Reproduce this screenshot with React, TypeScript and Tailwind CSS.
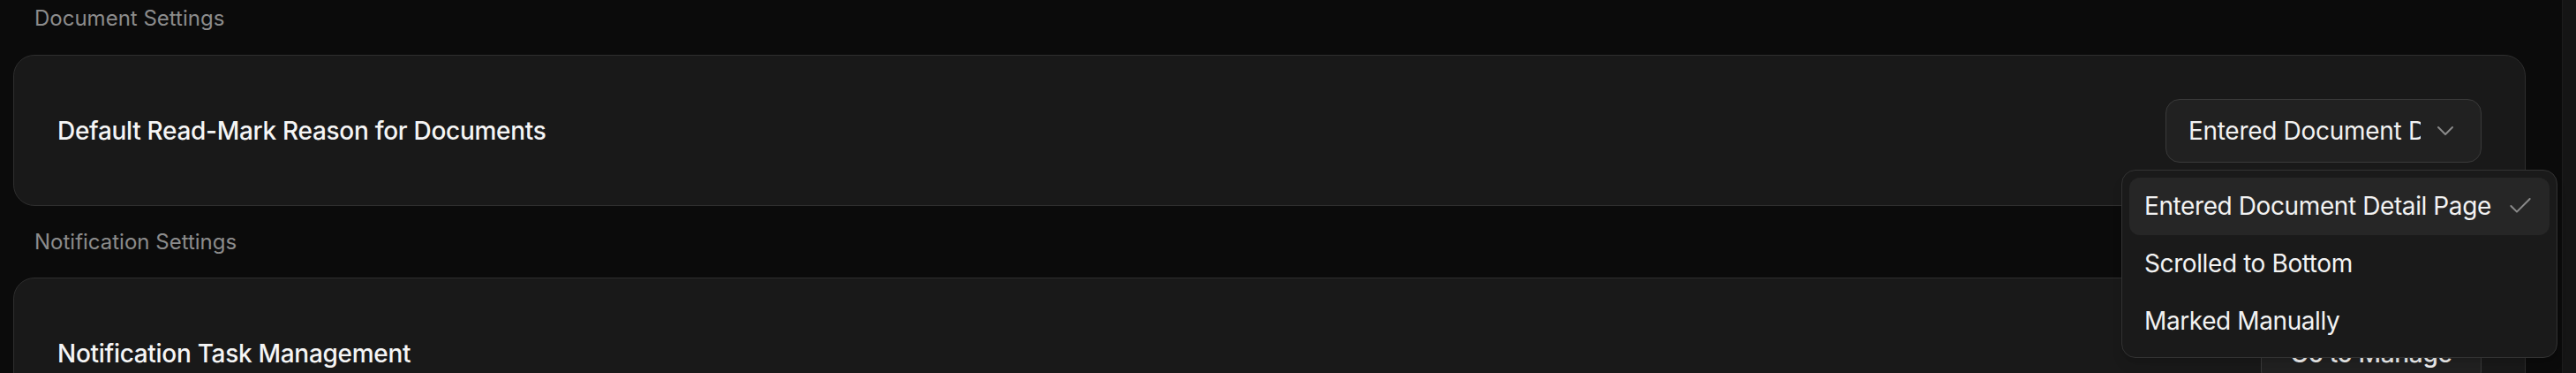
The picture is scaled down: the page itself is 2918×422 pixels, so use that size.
import { Check, ChevronDown } from "lucide-react";

const reasons = [
  "Entered Document Detail Page",
  "Scrolled to Bottom",
  "Marked Manually",
];

function SectionLabel({ children, first }: { children: string; first?: boolean }) {
  return (
    <div
      className={`h-8 pl-[24px] text-[24px] leading-8 text-[#8c8c8c] ${
        first ? "mb-[25px]" : "mt-[25px] mb-[24px]"
      }`}
    >
      {children}
    </div>
  );
}

function ReasonSelect() {
  const selected = reasons[0];
  return (
    <div className="relative">
      <button className="flex h-[72px] w-[358px] items-center gap-[12px] rounded-[16px] border border-[#3a3a3a] bg-[#212121] pl-[25px] pr-[24px] text-[28px] tracking-[-0.3px] text-[#f2f2f2]">
        <span className="flex-1 overflow-hidden whitespace-nowrap text-left">{selected}</span>
        <ChevronDown className="h-8 w-8 shrink-0 text-[#8a8a8a]" strokeWidth={1.5} />
      </button>

      {/* open menu */}
      <div className="absolute left-[-50px] top-[80px] z-10 w-[494px] rounded-[16px] border border-[#333333] bg-[#1a1a1a] p-[8px] shadow-lg">
        {reasons.map((r) => (
          <div
            key={r}
            className={`flex h-[65px] items-center justify-between rounded-[12px] px-[17px] text-[28px] tracking-[-0.4px] text-[#f2f2f2] ${
              r === selected ? "bg-[#262626]" : ""
            }`}
          >
            <span>{r}</span>
            {r === selected && <Check className="h-8 w-8 text-[#8a8a8a]" strokeWidth={1.5} />}
          </div>
        ))}
      </div>
    </div>
  );
}

export default function App() {
  return (
    <div className="flex h-[422px] w-full overflow-hidden bg-[#0b0b0b] font-['Inter',sans-serif]">
      <div className="flex-1 pl-[15px] pr-[41px] pt-[5px]">
        <SectionLabel first>Document Settings</SectionLabel>
        <div className="relative z-10 flex h-[171px] items-center justify-between rounded-[24px] border border-[#2e2e2e] bg-[#191919] px-[49px]">
          <span className="text-[28px] font-medium tracking-[-0.3px] text-[#f5f5f5]">
            Default Read-Mark Reason for Documents
          </span>
          <ReasonSelect />
        </div>

        <SectionLabel>Notification Settings</SectionLabel>
        <div className="flex h-[171px] items-center justify-between rounded-[24px] border border-[#2e2e2e] bg-[#191919] px-[49px]">
          <span className="text-[28px] font-medium tracking-[-0.3px] text-[#f5f5f5]">
            Notification Task Management
          </span>
          <button className="h-[72px] w-[250px] rounded-[16px] border border-[#3a3a3a] bg-[#212121] text-[28px] font-medium tracking-[-0.3px] text-[#f2f2f2]">
            Go to Manage
          </button>
        </div>
      </div>
      <div className="w-[16px] shrink-0 border-l border-[#1c1c1c] bg-[#151515]" />
    </div>
  );
}
